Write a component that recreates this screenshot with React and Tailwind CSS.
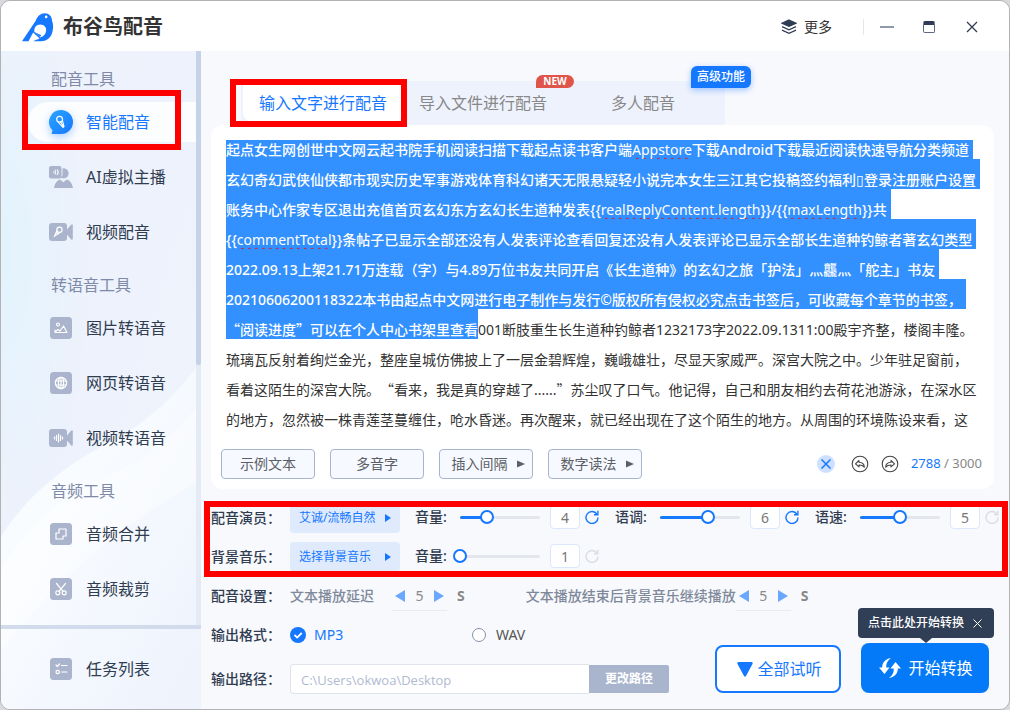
import React, { useState } from "react";
import clsx from "clsx";

const ICON_BG = "#aab4cc";

const Logo = () => (
  <svg viewBox="12 8 98 90" className="w-8 h-[30px]" aria-hidden="true">
    <path
      d="M12 97 L54 34 C59 20 69 11 82 11 C95 11 104 21 104 34 C108 44 108 54 106 64 C103 84 90 97 70 97 L46 97 C52 93 60 91 66 88 L46 70 L32 97 Z"
      fill="#1677ff"
    />
    <path
      d="M50 68 C48 54 56 45 68 45 C80 45 87 54 86 64 C85 75 78 83 68 85 Z"
      fill="#fff"
    />
    <path d="M50 68 L67 84 L71 78 Z" fill="#1677ff" />
    <circle cx="86" cy="22" r="4" fill="#fff" />
  </svg>
);

const IconVoice = () => (
  <svg viewBox="0 0 24 24" className="w-6 h-6 drop-shadow-[0_3px_4px_rgba(22,119,255,0.35)]">
    <defs>
      <linearGradient id="voice" x1="0" y1="0" x2="1" y2="1">
        <stop offset="0" stopColor="#2aa5ff" />
        <stop offset="1" stopColor="#1677ff" />
      </linearGradient>
    </defs>
    <path d="M12 0a12 12 0 1 1 0 24H2.500l1-3.600A12 12 0 0 1 12 0Z" fill="url(#voice)" />
    <circle cx="10.600" cy="9.200" r="2.900" fill="none" stroke="#fff" strokeWidth="1.200" />
    <path d="M9 12l5 5.400 1-.8-1.600-6.400M11.400 11.800l3 4.600" fill="none" stroke="#fff" strokeWidth="1.100" />
  </svg>
);

const IconHost = () => (
  <svg viewBox="0 0 24 24" className="w-6 h-6" fill={ICON_BG}>
    <path d="M2 1h8.500a2 2 0 0 1 2 2v8.500a2 2 0 0 1-2 2H2a2 2 0 0 1-2-2V3a2 2 0 0 1 2-2Z" />
    <path d="M13.500 3.500a5 5 0 1 1-2 8.800 3 3 0 0 0 2-2.800Z" />
    <path d="M5 23c.6-4.600 3-7.600 6-8.600l3.400 2.800 3.400-2.800c3.200 1 5.600 4 6.200 8.600Z" />
    <path d="M4 7.200h1M6.200 4.800v4.800M8 4.600c1.400 1.600 1.400 3.600 0 5.200" fill="none" stroke="#fff" strokeWidth="1.100" />
  </svg>
);

const Camera = ({ children }) => (
  <svg viewBox="0 0 24 24" className="w-6 h-6">
    <rect x="0" y="3" width="18" height="18" rx="3" fill={ICON_BG} />
    <path d="M18 9.500l4-4.800c.9-.9 1.800-.6 1.800.6v13.400c0 1.200-.9 1.500-1.800.6l-4-4.800Z" fill={ICON_BG} />
    <g fill="none" stroke="#fff" strokeWidth="1.200" strokeLinecap="round">
      {children}
    </g>
  </svg>
);

const Tile = ({ children }) => (
  <svg viewBox="0 0 24 24" className="w-6 h-6">
    <rect x="1" y="1" width="22" height="22" rx="3.500" fill={ICON_BG} />
    <g fill="none" stroke="#fff" strokeWidth="1.200" strokeLinecap="round" strokeLinejoin="round">
      {children}
    </g>
  </svg>
);

const menu = [
  {
    title: "配音工具",
    items: [
      { name: "智能配音", icon: <IconVoice />, active: true },
      { name: "AI虚拟主播", icon: <IconHost /> },
      {
        name: "视频配音",
        icon: (
          <Camera>
            <circle cx="10.500" cy="9.800" r="2.600" />
            <path d="M8 10.500l-2.400 5.700 5.200-3.600M8 13l1.400.8" />
          </Camera>
        ),
      },
    ],
  },
  {
    title: "转语音工具",
    items: [
      {
        name: "图片转语音",
        icon: (
          <Tile>
            <circle cx="9" cy="8.500" r="1.500" />
            <path d="M6 14v2.500h12l-3.500-6.500-3.500 5-2-1.500L6 16" />
          </Tile>
        ),
      },
      {
        name: "网页转语音",
        icon: (
          <Tile>
            <circle cx="12" cy="12" r="5.600" />
            <ellipse cx="12" cy="12" rx="2.600" ry="5.600" />
            <path d="M6.800 10h10.400M6.800 14h10.400M12 6.400v11.200" />
          </Tile>
        ),
      },
      {
        name: "视频转语音",
        icon: (
          <Camera>
            <path d="M5.500 11v2M7.500 9.500v5M9.500 8v8M11.500 9.500v5M13.500 11v2" />
          </Camera>
        ),
      },
    ],
  },
  {
    title: "音频工具",
    items: [
      {
        name: "音频合并",
        icon: (
          <Tile>
            <path d="M10 7h7v7h-3v3H7v-6h3V7" />
          </Tile>
        ),
      },
      {
        name: "音频裁剪",
        icon: (
          <Tile>
            <circle cx="8.800" cy="15.800" r="2" />
            <circle cx="15.200" cy="15.800" r="2" />
            <path d="M7.500 6.500l6.500 7.800M16.500 6.500L10 14.300" />
          </Tile>
        ),
      },
    ],
  },
];

const MenuItem = ({ name, icon, active }) => (
  <li
    className={clsx(
      "relative ml-[27px] h-10 rounded-l-full",
      active ? "bg-[#fcfdff] text-[#1677ff]" : "text-[#303c50]"
    )}
  >
    <a href="#" className="flex h-full items-center gap-[13px] pl-[21px]">
      {icon}
      <span>{name}</span>
    </a>
    {active && (
      <span className="pointer-events-none absolute -left-[6px] -top-3 h-[60px] w-[159px] border-6 border-[#ff0000]" />
    )}
  </li>
);

const Sidebar = () => (
  <aside className="relative flex w-[200px] shrink-0 flex-col bg-linear-to-br from-[#eff2fb] via-[#edf2fc] to-[#f1f4fc] text-base">
    <svg
      viewBox="0 0 200 658"
      preserveAspectRatio="none"
      className="absolute inset-0 h-full w-full"
      aria-hidden="true"
    >
      <defs>
        <radialGradient id="glow" cx="0" cy="0.3" r="0.45">
          <stop offset="0" stopColor="#e2f3fd" />
          <stop offset="1" stopColor="#e2f3fd" stopOpacity="0" />
        </radialGradient>
        <linearGradient id="sweep" x1="0" y1="0" x2="1" y2="1">
          <stop offset="0.35" stopColor="#f9fcff" />
          <stop offset="0.65" stopColor="#f3f7fe" />
          <stop offset="0.9" stopColor="#eff3fc" />
        </linearGradient>
      </defs>
      <rect width="200" height="658" fill="url(#glow)" />
      <path d="M200 310C170 352 140 375 100 396C50 422 15 460 0 486V658H200Z" fill="url(#sweep)" />
      <path d="M200 350C175 385 140 412 100 428C50 452 15 490 0 520V600C60 520 140 460 200 430Z" fill="#fff" opacity="0.4" />
    </svg>

    <div className="relative flex min-h-0 flex-1 overflow-hidden">
      <nav className="flex flex-1 flex-col gap-[21px] overflow-hidden pt-4">
        {menu.map((group) => (
          <section key={group.title}>
            <h2 className="mb-[11px] pl-[50px] leading-6 text-[#7f8aa8]">{group.title}</h2>
            <ul className="flex flex-col gap-[15px]">
              {group.items.map((item) => (
                <MenuItem key={item.name} {...item} />
              ))}
            </ul>
          </section>
        ))}
      </nav>
      <div className="w-[5px] bg-[#e4ebf5]">
        <div className="h-[314px] rounded-b-xs bg-[#c5d2e7]" />
      </div>
    </div>

    <div className="relative border-t-4 border-[#d1dbeb] pt-5 pb-5 text-[#303c50]">
      <a href="#" className="ml-12 flex h-10 items-center gap-[13px]">
        <Tile>
          <path d="M7 8l1.300 1.500L10.500 7M12.500 8.500H18M12.500 15H18" />
          <circle cx="8.700" cy="15" r="1.700" />
        </Tile>
        <span>任务列表</span>
      </a>
    </div>
  </aside>
);

const TitleBar = () => (
  <header className="flex h-[50px] shrink-0 items-center bg-white pt-[2px] pl-[21px] pr-[31px]">
    <Logo />
    <h1 className="ml-[9px] text-xl font-bold text-[#333]">布谷鸟配音</h1>
    <button className="ml-auto flex items-center gap-[7px] text-sm text-[#333]">
      <svg viewBox="0 0 16 16" className="w-4 h-4" fill="none" stroke="#303c56" strokeWidth="1.200">
        <path d="M8 1l7 3.200-7 3.200-7-3.200Z" fill="#303c56" />
        <path d="M1 7.600l7 3.200 7-3.200M1 11.100l7 3.200 7-3.200" />
      </svg>
      更多
    </button>
    <span className="ml-[31px] h-4 w-px bg-[#e3e6ec]" />
    <button aria-label="最小化" className="ml-4 h-[2px] w-[14px] bg-[#8f99ab]" />
    <button aria-label="最大化" className="ml-[29px] h-3 w-3 rounded-xs border border-t-4 border-[#5d687c] border-t-[#303c56]" />
    <button aria-label="关闭" className="ml-[31px]">
      <svg viewBox="0 0 12 12" className="w-3 h-3" stroke="#303c56" strokeWidth="1.300">
        <path d="M1 1l10 10M11 1L1 11" />
      </svg>
    </button>
  </header>
);

const Tabs = () => (
  <div role="tablist" className="ml-[30px] flex h-11 w-fit bg-[#eef2fd] pl-[2px] text-base text-[#888]">
    <button role="tab" aria-selected="true" className="relative h-10 w-40 rounded-lg bg-white pt-1 text-[#1677ff]">
      输入文字进行配音
      <span className="pointer-events-none absolute -left-[13px] -top-[2px] h-12 w-[177px] border-6 border-[#ff0000]" />
    </button>
    <button role="tab" aria-selected="false" className="relative w-40">
      导入文件进行配音
      <span className="absolute -top-[6px] right-[-11px] h-[13px] w-[38px] rounded-full rounded-bl-none bg-[#e0554b] text-[10px] leading-[13px] font-bold text-white">
        NEW
      </span>
    </button>
    <button role="tab" aria-selected="false" className="relative w-[162px] pr-[2px]">
      多人配音
      <span className="absolute -top-[15px] right-[-26px] h-[22px] w-[60px] rounded-md rounded-bl-none bg-[#1677ff] text-xs leading-[22px] font-medium text-white shadow-[0_2px_6px_rgba(22,119,255,0.4)]">
        高级功能
      </span>
    </button>
  </div>
);

const Typo = ({ children }) => (
  <span className="font-normal underline decoration-[#e81123] decoration-wavy decoration-1 underline-offset-2 [text-decoration-skip-ink:none]">
    {children}
  </span>
);

const Quote = ({ children }) => (
  <span className="font-['Noto_Sans_CJK_SC',sans-serif]">{children}</span>
);

const Marked = ({ children }) => (
  <span className="inline-block h-[30px] bg-[#3290ff] pt-[11px] pr-1 align-top font-medium text-white">{children}</span>
);

const Plain = ({ children }) => <span className="inline-block pt-[11px] align-top">{children}</span>;

const Article = () => (
  <div
    role="textbox"
    aria-multiline="true"
    aria-label="配音文本"
    tabIndex={0}
    className="h-[289px] overflow-hidden text-sm leading-[19px] whitespace-nowrap text-[#333] outline-none [text-spacing-trim:space-all]"
  >
    <div className="-mt-[11px]">
      <p className="h-[30px]">
        <Marked>
          起点女生网创世中文网云起书院手机阅读扫描下载起点读书客户端<Typo>Appstore</Typo>下载Android下载最近阅读快速导航分类频道
        </Marked>
      </p>
      <p className="h-[30px]">
        <Marked>
          玄幻奇幻武侠仙侠都市现实历史军事游戏体育科幻诸天无限悬疑轻小说完本女生三江其它投稿签约福利▯登录注册账户设置
        </Marked>
      </p>
      <p className="h-[30px]">
        <Marked>
          账务中心作家专区退出充值首页玄幻东方玄幻长生道种发表{"{{"}
          <Typo>realReplyContent.length</Typo>
          {"}}/{{"}
          <Typo>maxLength</Typo>
          {"}}"}共
        </Marked>
      </p>
      <p className="h-[30px]">
        <Marked>
          {"{{"}
          <Typo>commentTotal</Typo>
          {"}}"}条帖子已显示全部还没有人发表评论查看回复还没有人发表评论已显示全部长生道种钓鲸者著玄幻类型
        </Marked>
      </p>
      <p className="h-[30px]">
        <Marked>2022.09.13上架21.71万连载（字）与4.89万位书友共同开启《长生道种》的玄幻之旅「护法」灬龘灬「舵主」书友</Marked>
      </p>
      <p className="h-[30px]">
        <Marked>20210606200118322本书由起点中文网进行电子制作与发行©版权所有侵权必究点击书签后，可收藏每个章节的书签，</Marked>
      </p>
      <p className="flex h-[30px]">
        <span className="h-[30px] bg-[#3290ff] pt-[11px] font-medium text-white">
          <Quote>“</Quote>阅读进度<Quote>”</Quote>可以在个人中心书架里查看
        </span>
        <Plain>001断肢重生长生道种钓鲸者1232173字2022.09.1311:00殿宇齐整，楼阁丰隆。</Plain>
      </p>
      <p className="h-[30px]">
        <Plain>琉璃瓦反射着绚烂金光，整座皇城仿佛披上了一层金碧辉煌，巍峨雄壮，尽显天家威严。深宫大院之中。少年驻足窗前，</Plain>
      </p>
      <p className="h-[30px]">
        <Plain>
          看着这陌生的深宫大院。<Quote>“</Quote>看来，我是真的穿越了......<Quote>”</Quote>苏尘叹了口气。他记得，自己和朋友相约去荷花池游泳，在深水区
        </Plain>
      </p>
      <p className="h-[30px]">
        <Plain>的地方，忽然被一株青莲茎蔓缠住，呛水昏迷。再次醒来，就已经出现在了这个陌生的地方。从周围的环境陈设来看，这</Plain>
      </p>
    </div>
  </div>
);

const ToolButton = ({ children, arrow }) => (
  <button
    className={clsx(
      "flex h-[30px] w-[94px] items-center justify-center gap-[9px] rounded-sm border border-[#a9b4d0] bg-[#f6f9ff] text-sm text-[#5c5f66]",
      arrow && "pl-1"
    )}
  >
    {children}
    {arrow && (
      <svg viewBox="0 0 8 8" className="w-2 h-2" fill="#5c5f66">
        <path d="M0 0.500L8 4 0 7.500Z" />
      </svg>
    )}
  </button>
);

const RoundArrow = ({ flip, label }) => (
  <button aria-label={label} className={clsx(flip && "-scale-x-100")}>
    <svg viewBox="0 0 18 18" className="w-[18px] h-[18px]" fill="none" stroke="#444" strokeWidth="1.100" strokeLinejoin="round">
      <circle cx="9" cy="9" r="7.800" />
      <path d="M8 5.500L4.500 8.800 8 11.800V10c2.400 0 4 .6 5.300 2.200C13.200 9 11.200 7.400 8 7.300Z" />
    </svg>
  </button>
);

const Editor = () => (
  <section className="mr-[15px] rounded-xl bg-white pt-[15px] pb-[10px]">
    <div className="pl-[15px]">
      <Article />
    </div>
    <div className="mt-5 flex items-center gap-[15px] pl-[10px] pr-3">
      <ToolButton>示例文本</ToolButton>
      <ToolButton>多音字</ToolButton>
      <ToolButton arrow>插入间隔</ToolButton>
      <ToolButton arrow>数字读法</ToolButton>
      <div className="ml-auto flex items-center gap-3">
        <button aria-label="清空" className="mr-1 flex h-[18px] w-[18px] items-center justify-center rounded-full bg-[#cde1ff]">
          <svg viewBox="0 0 10 10" className="w-[10px] h-[10px]" stroke="#1677ff" strokeWidth="1.500">
            <path d="M0.500 0.500l9 9M9.500 0.500l-9 9" />
          </svg>
        </button>
        <RoundArrow label="撤销" />
        <RoundArrow label="重做" flip />
        <p className="text-[13px] text-[#888]">
          <span className="text-[#1677ff]">2788</span> / 3000
        </p>
      </div>
    </div>
  </section>
);

const RowLabel = ({ children }) => (
  <span className="w-[79px] shrink-0 text-sm font-medium text-[#303c50]">{children}</span>
);

const Picker = ({ children }) => (
  <button className="flex h-[30px] w-[110px] shrink-0 items-center justify-between rounded-sm bg-[#dfebfd] px-[9px] text-xs text-[#1677ff]">
    {children}
    <svg viewBox="0 0 6 8" className="w-[6px] h-2" fill="#1677ff">
      <path d="M0 0L6 4 0 8Z" />
    </svg>
  </button>
);

const SliderControl = ({ label, min = 0, initial, muted }) => {
  const [value, setValue] = useState(initial);
  const percent = ((value - min) / (10 - min)) * 100;
  return (
    <div className="flex w-[200px] shrink-0 items-center pb-[2px]">
      <label className="w-[45px] text-sm font-medium text-[#303c50]">{label}:</label>
      <div className="relative h-[3px] w-20 rounded-full bg-[#e3e6ed]">
        <div className="h-full rounded-full bg-[#1677ff]" style={{ width: `${percent}%` }} />
        <input
          type="range"
          aria-label={label}
          min={min}
          max="10"
          value={value}
          onChange={(e) => setValue(Number(e.target.value))}
          className="absolute -left-[7px] -top-[6px] h-[14px] w-[94px] appearance-none bg-transparent [&::-webkit-slider-thumb]:h-[14px] [&::-webkit-slider-thumb]:w-[14px] [&::-webkit-slider-thumb]:appearance-none [&::-webkit-slider-thumb]:rounded-full [&::-webkit-slider-thumb]:border-2 [&::-webkit-slider-thumb]:border-[#1677ff] [&::-webkit-slider-thumb]:bg-white"
        />
      </div>
      <input
        aria-label={`${label}数值`}
        value={value}
        onChange={(e) => setValue(Number(e.target.value) || min)}
        className="ml-[10px] h-6 w-[30px] rounded-sm border border-[#dbe7fb] bg-white text-center text-sm text-[#777]"
      />
      <button aria-label="重置" className="ml-[5px]">
        <svg
          viewBox="0 0 14 14"
          className="w-[14px] h-[14px]"
          fill="none"
          stroke={muted ? "#dadde3" : "#1677ff"}
          strokeWidth="1.400"
        >
          <path d="M12 4.200A6 6 0 1 0 13 7.500" />
          <path d="M12.900 0.800V4.700H9" />
        </svg>
      </button>
    </div>
  );
};

const Stepper = () => {
  const [value, setValue] = useState(5);
  return (
    <div className="flex shrink-0 items-center gap-[10px]">
      <div className="flex h-[30px] w-[55px] items-center justify-between border-b border-[#e9ebf0] px-[3px]">
        <button aria-label="减少" onClick={() => setValue(value - 1)}>
          <svg viewBox="0 0 10 12" className="w-[10px] h-3" fill="#6aa7ff">
            <path d="M10 0V12L0 6Z" />
          </svg>
        </button>
        <span className="text-sm font-normal text-[#888]">{value}</span>
        <button aria-label="增加" onClick={() => setValue(value + 1)}>
          <svg viewBox="0 0 10 12" className="w-[10px] h-3" fill="#6aa7ff">
            <path d="M0 0V12L10 6Z" />
          </svg>
        </button>
      </div>
      <span className="text-sm font-bold text-[#888]">S</span>
    </div>
  );
};

const Settings = () => (
  <section className="relative mt-[14px] flex flex-col gap-[9px]">
    <div className="flex h-[30px] items-center">
      <RowLabel>配音演员：</RowLabel>
      <Picker>艾诚/流畅自然</Picker>
      <div className="ml-[15px] flex">
        <SliderControl label="音量" min={1} initial={4} />
        <SliderControl label="语调" initial={6} />
        <SliderControl label="语速" initial={5} muted />
      </div>
    </div>
    <div className="flex h-[30px] items-center">
      <RowLabel>背景音乐：</RowLabel>
      <Picker>选择背景音乐</Picker>
      <div className="ml-[15px] flex">
        <SliderControl label="音量" min={1} initial={1} muted />
      </div>
    </div>
    <span className="pointer-events-none absolute -left-[7px] -top-[2px] right-px h-[76px] border-6 border-[#ff0000]" />

    <div className="flex h-[30px] items-center text-sm font-medium text-[#7f899a]">
      <RowLabel>配音设置：</RowLabel>
      <span className="mr-[18px] shrink-0">文本播放延迟</span>
      <Stepper />
      <span className="ml-[61px] shrink-0">文本播放结束后背景音乐继续播放</span>
      <Stepper />
    </div>

    <div className="flex items-end justify-between pr-5">
      <div>
        <div className="mb-[14px] flex h-[30px] items-center text-sm text-[#555]">
          <RowLabel>输出格式：</RowLabel>
          <label className="flex w-[182px] items-center gap-2 text-[#1677ff]">
            <span className="relative flex">
              <input
                type="radio"
                name="format"
                defaultChecked
                className="h-4 w-4 appearance-none rounded-full bg-[#1677ff]"
              />
              <svg viewBox="0 0 16 16" className="pointer-events-none absolute inset-0" fill="none" stroke="#fff" strokeWidth="1.800">
                <path d="M4.500 8l2.700 2.600 4.500-4.600" />
              </svg>
            </span>
            MP3
          </label>
          <label className="flex items-center gap-[10px]">
            <input
              type="radio"
              name="format"
              className="h-[14px] w-[14px] appearance-none rounded-full border border-[#8590ab] bg-white"
            />
            WAV
          </label>
        </div>
        <div className="flex h-[30px] items-center">
          <RowLabel>输出路径：</RowLabel>
          <input
            aria-label="输出路径"
            defaultValue="C:\Users\okwoa\Desktop"
            className="h-[30px] w-[299px] rounded-l-sm border border-r-0 border-[#dfe3ec] bg-white px-[10px] pt-[2px] font-['Open_Sans','Noto_Sans_CJK_SC',sans-serif] text-[13px] text-[#b0bad0]"
          />
          <button className="h-[28px] w-20 rounded-r-xs bg-[#a9b4cd] text-xs font-bold text-white">更改路径</button>
        </div>
      </div>

      <div className="flex items-end gap-5 pb-px text-base">
        <button className="flex h-12 w-[126px] items-center justify-center gap-1 rounded-lg border-2 border-[#1677ff] bg-white pl-[3px] text-[#1677ff]">
          <svg viewBox="0 0 16 15" className="w-4 h-[15px]" fill="#1677ff">
            <path d="M1.500 0h13a1.200 1.200 0 0 1 1 1.900L9 14a1.200 1.200 0 0 1-2 0L.5 1.900A1.200 1.200 0 0 1 1.500 0Z" />
          </svg>
          全部试听
        </button>
        <div className="relative">
          <button className="flex h-[50px] w-32 items-center justify-center gap-[7px] rounded-lg bg-[#057af8] pl-[2px] text-white">
            <svg viewBox="0 0 22 20" className="w-[22px] h-5" fill="#fff">
              <path d="M12 0C6 1 3 5 3.200 9.500H0l5.500 6.500 5-6.500H7.200C7 5.500 8.500 2.500 12 0Z" />
              <path d="M10 20c6-1 9-5 8.800-9.500H22L16.500 4l-5 6.500h3.300c.2 4-1.300 7-4.800 9.500Z" />
            </svg>
            开始转换
          </button>
          <div
            role="tooltip"
            className="absolute bottom-[55px] -right-[5px] flex h-[30px] w-[136px] items-center gap-[9px] rounded-sm bg-[#303e56] pl-[10px] text-xs font-medium text-white"
          >
            点击此处开始转换
            <button aria-label="关闭提示">
              <svg viewBox="0 0 9 9" className="w-[9px] h-[9px]" stroke="#fff" strokeWidth="1">
                <path d="M0.500 0.500l8 8M8.500 0.500l-8 8" />
              </svg>
            </button>
            <span className="absolute top-full left-[62px] border-x-6 border-t-5 border-x-transparent border-t-[#303e56]" />
          </div>
        </div>
      </div>
    </div>
  </section>
);

const App = () => {
  return (
    <div className="flex min-h-screen bg-[#d9dade] font-['Noto_Sans','Noto_Sans_CJK_SC',sans-serif]">
      <div className="flex flex-1 flex-col overflow-hidden rounded-[10px] border border-[#b2b2b4]">
        <TitleBar />
        <div className="flex flex-1">
          <Sidebar />
          <main className="min-w-0 flex-1 bg-[#f8f9fd] pl-[10px] pt-[30px]">
            <Tabs />
            <Editor />
            <Settings />
          </main>
        </div>
      </div>
    </div>
  );
};

export default App;
